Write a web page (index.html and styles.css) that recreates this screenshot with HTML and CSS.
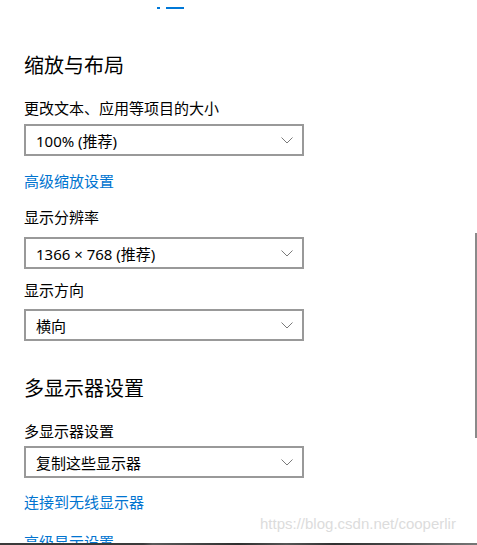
FILE: index.html
```html
<!DOCTYPE html>
<html lang="zh-CN">
<head>
<meta charset="utf-8">
<link rel="stylesheet" href="styles.css">
</head>
<body>
<div class="page">
  <div class="top-marks"><span class="mark mark-a"></span><span class="mark mark-b"></span></div>

  <h2 class="section-title">缩放与布局</h2>
  <div class="label">更改文本、应用等项目的大小</div>
  <div class="select select-1"><span>100% (推荐)</span><svg class="chev" width="12" height="7" viewBox="0 0 12 7"><path d="M0.5 0.5 L6 6 L11.5 0.5" fill="none" stroke="#7a7a7a" stroke-width="1"/></svg></div>
  <a class="link link-1">高级缩放设置</a>

  <div class="label label-2">显示分辨率</div>
  <div class="select select-2"><span>1366 × 768 (推荐)</span><svg class="chev" width="12" height="7" viewBox="0 0 12 7"><path d="M0.5 0.5 L6 6 L11.5 0.5" fill="none" stroke="#7a7a7a" stroke-width="1"/></svg></div>

  <div class="label label-3">显示方向</div>
  <div class="select select-3"><span>横向</span><svg class="chev" width="12" height="7" viewBox="0 0 12 7"><path d="M0.5 0.5 L6 6 L11.5 0.5" fill="none" stroke="#7a7a7a" stroke-width="1"/></svg></div>

  <h2 class="section-title section-2">多显示器设置</h2>
  <div class="label label-4">多显示器设置</div>
  <div class="select select-4"><span>复制这些显示器</span><svg class="chev" width="12" height="7" viewBox="0 0 12 7"><path d="M0.5 0.5 L6 6 L11.5 0.5" fill="none" stroke="#7a7a7a" stroke-width="1"/></svg></div>
  <a class="link link-2">连接到无线显示器</a>
  <a class="link link-3">高级显示设置</a>
</div>
<div class="watermark">https://blog.csdn.net/cooperlir</div>
<div class="scroll-thumb"></div>
<div class="taskbar-edge"></div>
</body>
</html>
```
FILE: styles.css
```css
html, body {
  margin: 0;
  padding: 0;
  background: #ffffff;
  width: 477px;
  height: 545px;
  overflow: hidden;
}
body {
  position: relative;
  font-family: "Noto Sans", "Noto Sans CJK SC", sans-serif;
  color: #000;
}
.page {
  padding-left: 24px;
  display: flex;
  flex-direction: column;
  align-items: flex-start;
}
.top-marks {
  height: 52px;
  display: flex;
  align-items: flex-start;
  padding-top: 7px;
  box-sizing: border-box;
  padding-left: 133px;
}
.mark {
  display: block;
  height: 2px;
  background: #0078d7;
}
.mark-a { width: 3px; }
.mark-b { width: 18px; margin-left: 6px; }

.section-title {
  margin: 0;
  font-size: 20px;
  font-weight: normal;
  line-height: 28px;
}
.section-2 { margin-top: 34px; }

.label {
  font-size: 15px;
  line-height: 20px;
  margin-top: 18px;
}
.label-2 { margin-top: 16px; }
.label-3 { margin-top: 11px; }
.label-4 { margin-top: 18px; }

.select {
  width: 280px;
  height: 32px;
  box-sizing: border-box;
  border: 2px solid #999999;
  display: flex;
  align-items: center;
  justify-content: space-between;
  padding: 0 8px 0 10px;
  font-size: 15px;
}
.select-1 { margin-top: 6px; }
.select-2 { margin-top: 10px; }
.select-3 { margin-top: 9px; }
.select-4 { margin-top: 5px; }
.chev { display: block; margin-right: 1px; }

.link {
  color: #0074d0;
  font-size: 15px;
  line-height: 20px;
}
.link-1 { margin-top: 15px; }
.link-2 { margin-top: 14px; }
.link-3 { margin-top: 20px; }

.watermark {
  position: absolute;
  left: 260px;
  top: 515px;
  font-family: "Liberation Sans", Arial, sans-serif;
  font-size: 15px;
  color: #dcdcdc;
}
.scroll-thumb {
  position: absolute;
  left: 475px;
  top: 233px;
  width: 2px;
  height: 205px;
  background: #8a8a8a;
}
.taskbar-edge {
  position: absolute;
  left: 0;
  bottom: 0;
  width: 477px;
  height: 2px;
  background: linear-gradient(90deg, #3a3a3a 0%, #3a3a3a 30%, #5a5a5a 32%, #2e2e2e 50%, #555 60%, #303030 70%, #4a4a4a 85%, #777 100%);
}
```
